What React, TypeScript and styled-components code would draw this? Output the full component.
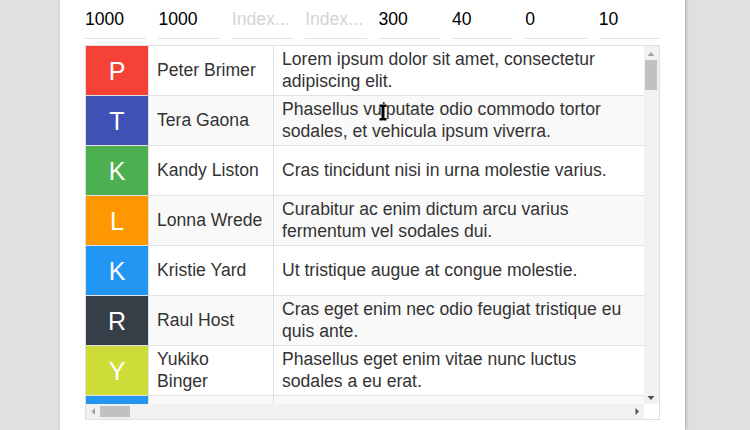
import React from "react";
import styled, { createGlobalStyle } from "styled-components";

const GlobalStyle = createGlobalStyle`
  html, body { margin: 0; padding: 0; background: #e0e0e0; }
  body { font-family: "Liberation Sans", Arial, sans-serif; overflow: hidden; }
`;

const Page = styled.div`
  display: flex;
  padding: 0 65px 0 60px;
  height: 430px;
`;

const Panel = styled.div`
  width: 625px;
  box-sizing: border-box;
  background: #ffffff;
  padding: 0 25px;
  box-shadow: 1px 0 3px rgba(0, 0, 0, 0.25);
`;

const Controls = styled.div`
  display: flex;
  gap: 12px;
`;

const Field = styled.input`
  flex: 1;
  min-width: 0;
  height: 39px;
  box-sizing: border-box;
  padding: 0;
  border: none;
  border-bottom: 1px solid #e0e0e0;
  outline: none;
  background: transparent;
  font-family: "Liberation Sans", Arial, sans-serif;
  font-size: 17.6px;
  color: #000;
  &::placeholder { color: #d4d4d4; }
`;

const GridBox = styled.div`
  margin-top: 6px;
  height: 375px;
  box-sizing: border-box;
  border: 1px solid #e0e0e0;
  display: grid;
  grid-template-columns: 1fr 15px;
  grid-template-rows: 1fr 15px;
`;

const Viewport = styled.div`
  overflow: hidden;
  min-width: 0;
  min-height: 0;
`;

const Row = styled.div<{ $odd: boolean }>`
  display: flex;
  height: 50px;
  box-sizing: border-box;
  border-bottom: 1px solid #e0e0e0;
  background: ${(p) => (p.$odd ? "#f9f9f9" : "#ffffff")};
  color: #333;
  font-size: 17.6px;
  line-height: 1.2;
`;

const Avatar = styled.div<{ $color: string }>`
  flex: 0 0 63px;
  box-sizing: border-box;
  border-right: 1px solid #e0e0e0;
  background: ${(p) => p.$color};
  color: #fff;
  font-size: 25px;
  display: flex;
  align-items: center;
  justify-content: center;
`;

const Cell = styled.div<{ $w: number }>`
  flex: 0 0 ${(p) => p.$w}px;
  box-sizing: border-box;
  border-right: 1px solid #e0e0e0;
  padding: 0 10px 0 8px;
  display: flex;
  align-items: center;
`;

const VBar = styled.div`
  display: flex;
  flex-direction: column;
  background: #f1f1f1;
`;

const HBar = styled.div`
  display: flex;
  background: #f1f1f1;
`;

const Corner = styled.div`
  background: #ffffff;
`;

const Track = styled.div<{ $vertical: boolean }>`
  flex: 1;
  display: flex;
  flex-direction: ${(p) => (p.$vertical ? "column" : "row")};
  padding: ${(p) => (p.$vertical ? "0 2px 0 1px" : "2px 0 2px 0")};
`;

const Thumb = styled.div<{ $vertical: boolean }>`
  background: #c1c1c1;
  ${(p) => (p.$vertical ? "height: 30px;" : "width: 30px;")}
`;

const ArrowBtn = styled.svg`
  display: block;
  flex: 0 0 auto;
`;

const Cursor = styled.svg`
  position: fixed;
  left: 378px;
  top: 103px;
  pointer-events: none;
`;

const fields = ["1000", "1000", "", "", "300", "40", "0", "10"];

const rows = [
  { c: "#f44336", n: "Peter Brimer", d: "Lorem ipsum dolor sit amet, consectetur adipiscing elit." },
  { c: "#3f51b5", n: "Tera Gaona", d: "Phasellus vulputate odio commodo tortor sodales, et vehicula ipsum viverra." },
  { c: "#4caf50", n: "Kandy Liston", d: "Cras tincidunt nisi in urna molestie varius." },
  { c: "#ff9800", n: "Lonna Wrede", d: "Curabitur ac enim dictum arcu varius fermentum vel sodales dui." },
  { c: "#2196f3", n: "Kristie Yard", d: "Ut tristique augue at congue molestie." },
  { c: "#363e47", n: "Raul Host", d: "Cras eget enim nec odio feugiat tristique eu quis ante." },
  { c: "#cddc39", n: "Yukiko Binger", d: "Phasellus eget enim vitae nunc luctus sodales a eu erat." },
  { c: "#2196f3", n: "Kandy Liston", d: "Cras tincidunt nisi in urna molestie varius." },
];

const Arrow = ({ points, color }: { points: string; color: string }) => (
  <ArrowBtn width="15" height="14" viewBox="0 0 15 14">
    <polygon points={points} fill={color} />
  </ArrowBtn>
);

export default function App() {
  return (
    <>
      <GlobalStyle />
      <Page>
        <Panel>
          <Controls>
            {fields.map((v, i) => (
              <Field key={i} defaultValue={v} placeholder="Index..." />
            ))}
          </Controls>
          <GridBox>
            <Viewport>
              {rows.map((r, i) => (
                <Row key={i} $odd={i % 2 === 1}>
                  <Avatar $color={r.c}>{r.n[0]}</Avatar>
                  <Cell $w={125}>{r.n}</Cell>
                  <Cell $w={371}>{r.d}</Cell>
                </Row>
              ))}
            </Viewport>
            <VBar>
              <Arrow points="3.5,10 10.5,10 7,6" color="#a3a3a3" />
              <Track $vertical>
                <Thumb $vertical />
              </Track>
              <Arrow points="3.5,6 10.5,6 7,10" color="#505050" />
            </VBar>
            <HBar>
              <ArrowBtn width="14" height="15" viewBox="0 0 14 15">
                <polygon points="9,4 9,11 5.5,7.5" fill="#a3a3a3" />
              </ArrowBtn>
              <Track $vertical={false}>
                <Thumb $vertical={false} />
              </Track>
              <ArrowBtn width="14" height="15" viewBox="0 0 14 15">
                <polygon points="5.5,4 5.5,11 9,7.5" fill="#505050" />
              </ArrowBtn>
            </HBar>
            <Corner />
          </GridBox>
        </Panel>
      </Page>
      <Cursor width="10" height="19" viewBox="0 0 10 19">
        <path
          d="M1.5 1.5h3l0.5 0.5 0.5-0.5h3v2.5H6.5v11h2v2.5h-3l-0.5-0.5-0.5 0.5h-3v-2.5h2V4h-2z"
          fill="#000"
          stroke="#fff"
          strokeWidth="1"
          paintOrder="stroke"
        />
      </Cursor>
    </>
  );
}
